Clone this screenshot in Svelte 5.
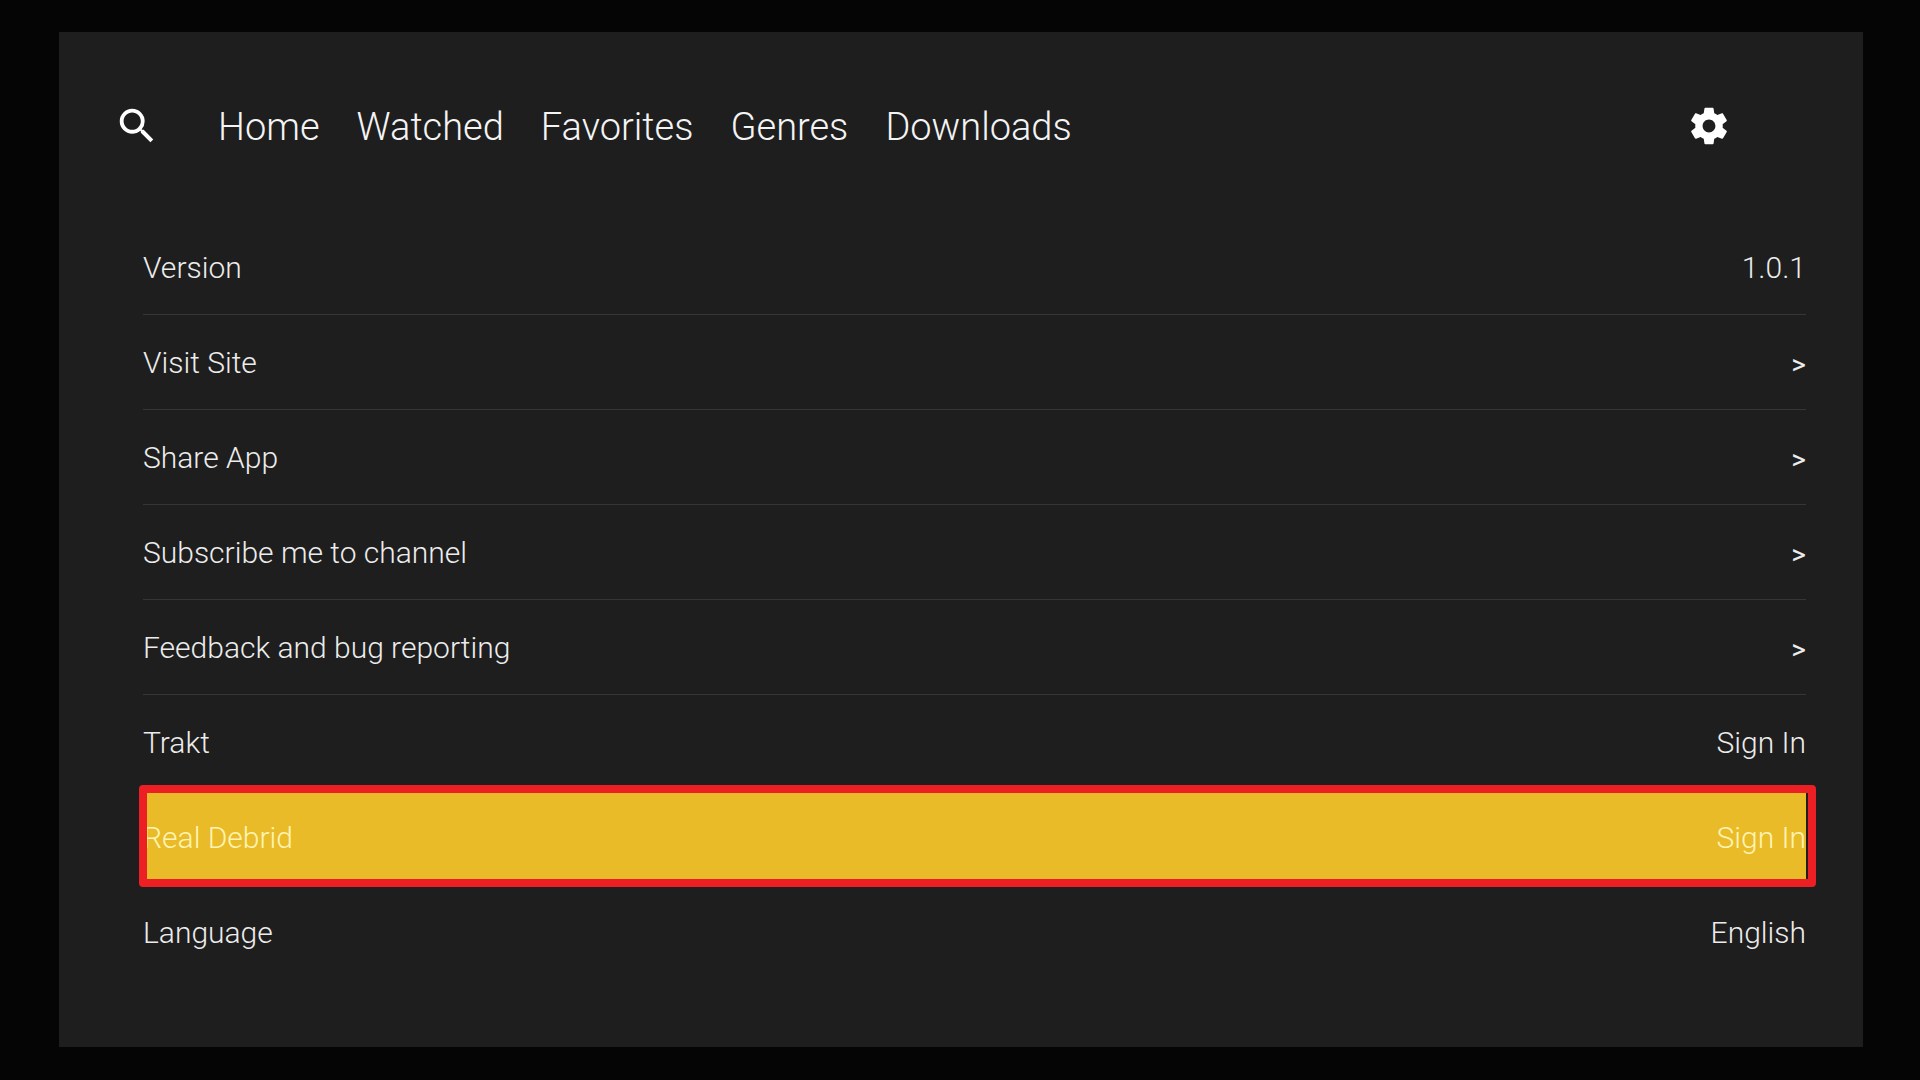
<script lang="ts">
	interface Row {
		label: string;
		value: string;
	}

	const tabs = ['Home', 'Watched', 'Favorites', 'Genres', 'Downloads'];

	const rows: Row[] = [
		{ label: 'Version', value: '1.0.1' },
		{ label: 'Visit Site', value: '>' },
		{ label: 'Share App', value: '>' },
		{ label: 'Subscribe me to channel', value: '>' },
		{ label: 'Feedback and bug reporting', value: '>' },
		{ label: 'Trakt', value: 'Sign In' },
		{ label: 'Real Debrid', value: 'Sign In' },
		{ label: 'Language', value: 'English' }
	];

	let selected = $state('Real Debrid');
</script>

<div class="screen">
	<div class="panel">
		<header class="topbar">
			<button class="icon-btn" aria-label="Search">
				<svg class="search-icon" viewBox="0 0 24 24">
					<path
						d="M15.5 14h-.79l-.28-.27A6.471 6.471 0 0 0 16 9.5 6.5 6.5 0 1 0 9.5 16c1.61 0 3.09-.59 4.23-1.57l.27.28v.79l5 4.99L20.49 19l-4.99-5zm-6 0C7.01 14 5 11.99 5 9.5S7.01 5 9.5 5 14 7.01 14 9.5 11.99 14 9.5 14z"
					/>
				</svg>
			</button>
			<nav class="tabs">
				{#each tabs as tab}
					<a href="#{tab.toLowerCase()}">{tab}</a>
				{/each}
			</nav>
			<button class="icon-btn" aria-label="Settings">
				<svg class="gear-icon" viewBox="0 0 24 24">
					<path
						d="M19.43 12.98c.04-.32.07-.64.07-.98s-.03-.66-.07-.98l2.11-1.65c.19-.15.24-.42.12-.64l-2-3.46c-.12-.22-.39-.3-.61-.22l-2.49 1c-.52-.4-1.08-.73-1.69-.98l-.38-2.65C14.46 2.18 14.25 2 14 2h-4c-.25 0-.46.18-.49.42l-.38 2.65c-.61.25-1.17.59-1.69.98l-2.49-1c-.23-.09-.49 0-.61.22l-2 3.46c-.13.22-.07.49.12.64l2.11 1.65c-.04.32-.07.65-.07.98s.03.66.07.98l-2.11 1.65c-.19.15-.24.42-.12.64l2 3.46c.12.22.39.3.61.22l2.49-1c.52.4 1.08.73 1.69.98l.38 2.65c.03.24.24.42.49.42h4c.25 0 .46-.18.49-.42l.38-2.65c.61-.25 1.17-.59 1.69-.98l2.49 1c.23.09.49 0 .61-.22l2-3.46c.12-.22.07-.49-.12-.64l-2.11-1.65zM12 15.5c-1.93 0-3.5-1.57-3.5-3.5s1.57-3.5 3.5-3.5 3.5 1.57 3.5 3.5-1.57 3.5-3.5 3.5z"
					/>
				</svg>
			</button>
		</header>

		<ul class="settings">
			{#each rows as row}
				<li class:selected={row.label === selected}>
					<button class="row" onclick={() => (selected = row.label)}>
						<span>{row.label}</span>
						<span class:chevron={row.value === '>'}>{row.value}</span>
					</button>
				</li>
			{/each}
		</ul>
	</div>
</div>

<style>
	:global(body) {
		margin: 0;
		background: #050505;
	}

	.screen {
		box-sizing: border-box;
		min-height: 100vh;
		display: flex;
		padding: 32px 57px 33px 59px;
		font-family: Roboto, 'Noto Sans', sans-serif;
		font-weight: 300;
		color: #ececec;
	}

	.panel {
		flex: 1;
		background: #1e1e1e;
	}

	.topbar {
		display: flex;
		align-items: center;
		height: 188px;
		padding: 0 132px 0 55px;
	}

	.icon-btn {
		display: flex;
		padding: 0;
		border: 0;
		background: none;
		color: #fff;
		cursor: pointer;
	}

	.icon-btn svg {
		display: block;
		fill: currentColor;
	}

	.search-icon {
		width: 46px;
		height: 46px;
	}

	.gear-icon {
		width: 44px;
		height: 44px;
	}

	.tabs {
		flex: 1;
		display: flex;
		gap: 37px;
		margin-left: 58px;
		padding-top: 2px;
	}

	.tabs a {
		font-size: 38px;
		line-height: 48px;
		color: #f4f4f4;
		text-decoration: none;
	}

	.settings {
		margin: 0;
		padding: 0 57px 0 84px;
		list-style: none;
	}

	.settings li {
		position: relative;
		border-bottom: 1px solid #363636;
	}

	.settings li:nth-child(n + 6) {
		border-color: transparent;
	}

	.row {
		display: flex;
		align-items: center;
		justify-content: space-between;
		width: 100%;
		height: 94px;
		padding: 0;
		border: 0;
		background: none;
		font: inherit;
		font-size: 30px;
		color: inherit;
		cursor: pointer;
	}

	.chevron {
		padding-top: 4px;
		font-size: 28px;
		font-weight: 400;
	}

	.selected .row {
		background: #e9bb28;
		color: #fff4b4;
	}

	/* focus frame drawn over the highlighted row */
	.selected::after {
		content: '';
		position: absolute;
		inset: -5px -10px -3px -4px;
		border: 8px solid #ec1f25;
		border-radius: 4px;
		pointer-events: none;
	}
</style>
